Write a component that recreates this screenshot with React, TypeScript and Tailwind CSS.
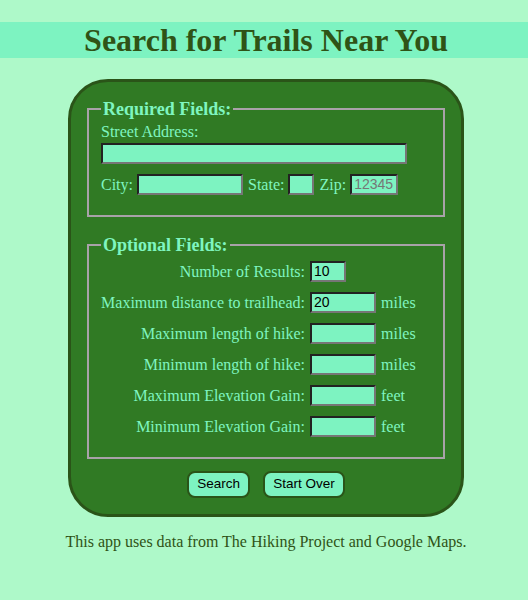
import React from 'react';

const serif = { fontFamily: '"Liberation Serif", "Times New Roman", serif' };
const sans = { fontFamily: '"Liberation Sans", Arial, sans-serif' };

const inputCls =
  'h-[21px] bg-[#7df3c1] border-2 border-solid border-t-[#222222] border-l-[#222222] border-b-[#767676] border-r-[#767676] px-[2px] text-[14px] text-black outline-none align-middle';

function OptRow({ label, value, width, unit }: { label: string; value?: string; width: string; unit?: string }) {
  return (
    <div className="flex items-center h-[21px]">
      <span className="w-[204px] text-right">{label}</span>
      <input className={`${inputCls} ${width} ml-[5px]`} style={sans} defaultValue={value} />
      {unit && <span className="ml-[5px]">{unit}</span>}
    </div>
  );
}

export default function App() {
  return (
    <div className="min-h-[600px] bg-[#aef9c9] text-[16px] pt-px" style={serif}>
      <h1 className="mt-[21px] mb-[21px] bg-[#7df3c1] pl-[4px] text-center text-[32px] leading-[36px] font-bold text-[#2f5316]">
        Search for Trails Near You
      </h1>

      <div className="pl-[4px]">
        <div className="mx-auto w-[396px] rounded-[40px] border-[3px] border-solid border-[#2a5418] bg-[#307a24] px-[16px] pt-[17px] pb-[16px] text-[#7ff5c0]">
          <fieldset className="border-2 border-solid border-[#a9a2a9] px-[12px] pb-[20px]">
            <legend className="px-[2px] font-bold text-[18px] leading-[20px]">Required Fields:</legend>
            <div className="mt-[4px] leading-[18px]">Street Address:</div>
            <input className={`${inputCls} block w-[306px] mt-[2px]`} />
            <div className="mt-[10px] flex items-center gap-[4px] leading-[21px]">
              <span>City:</span>
              <input className={`${inputCls} w-[106px]`} />
              <span className="ml-[1px]">State:</span>
              <input className={`${inputCls} w-[26px]`} />
              <span className="ml-[1px]">Zip:</span>
              <input
                className={`${inputCls} w-[48px] placeholder:text-[#767676]`}
                style={sans}
                placeholder="12345"
              />
            </div>
          </fieldset>

          <fieldset className="mt-[18px] border-2 border-solid border-[#a9a2a9] px-[12px] pb-[20px]">
            <legend className="px-[2px] font-bold text-[18px] leading-[20px]">Optional Fields:</legend>
            <div className="mt-[6px] flex flex-col gap-[10px]">
              <OptRow label="Number of Results:" value="10" width="w-[36px]" />
              <OptRow label="Maximum distance to trailhead:" value="20" width="w-[66px]" unit="miles" />
              <OptRow label="Maximum length of hike:" width="w-[66px]" unit="miles" />
              <OptRow label="Minimum length of hike:" width="w-[66px]" unit="miles" />
              <OptRow label="Maximum Elevation Gain:" width="w-[66px]" unit="feet" />
              <OptRow label="Minimum Elevation Gain:" width="w-[66px]" unit="feet" />
            </div>
          </fieldset>

          <div className="mt-[12px] flex justify-center gap-[13px] text-[13.5px] text-black" style={sans}>
            <button className="h-[27px] rounded-[8px] border-2 border-solid border-[#2a5418] bg-[#7df3c1] px-[8px]">
              Search
            </button>
            <button className="h-[27px] rounded-[8px] border-2 border-solid border-[#2a5418] bg-[#7df3c1] px-[8px]">
              Start Over
            </button>
          </div>
        </div>
      </div>

      <p className="mt-[16px] pl-[4px] text-center text-[#2f5316] leading-[18px]">
        This app uses data from The Hiking Project and Google Maps.
      </p>
    </div>
  );
}
